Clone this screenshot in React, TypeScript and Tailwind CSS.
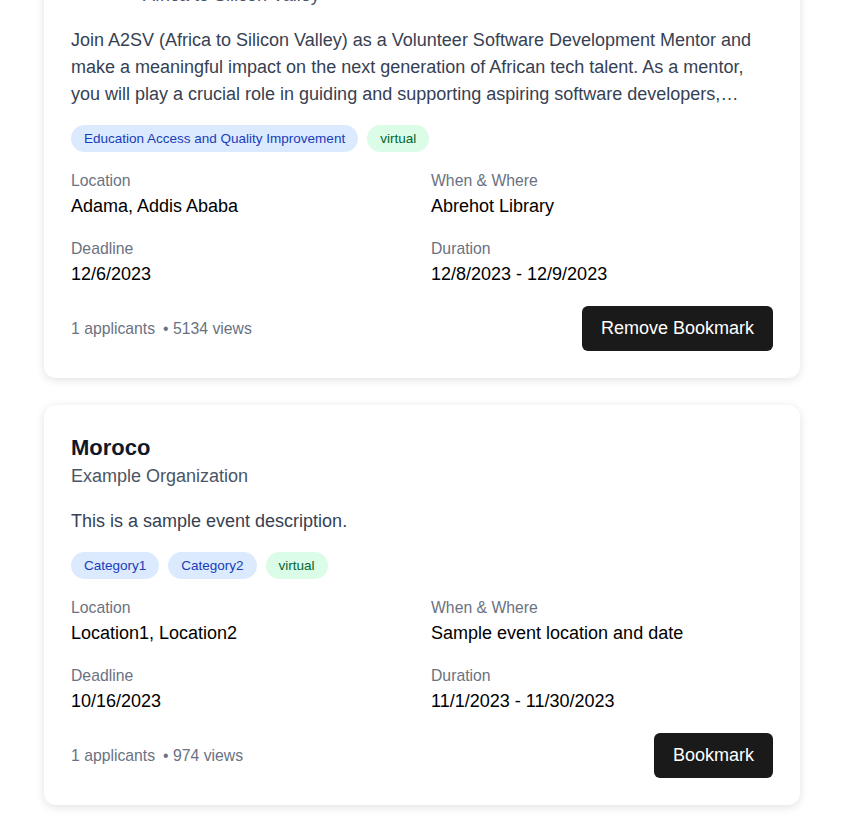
import React from 'react';

type Opportunity = {
  id: string;
  title: string;
  orgName: string;
  logo?: boolean;
  description: string;
  categories: string[];
  mode: string;
  locations: string;
  whenWhere: string;
  deadline: string;
  duration: string;
  applicants: number;
  views: number;
  saved: boolean;
};

const opportunities: Opportunity[] = [
  {
    id: 'a2sv',
    title: 'Volunteer Software Development Mentor',
    orgName: 'Africa to Silicon Valley',
    logo: true,
    description:
      'Join A2SV (Africa to Silicon Valley) as a Volunteer Software Development Mentor and make a meaningful impact on the next generation of African tech talent. As a mentor, you will play a crucial role in guiding and supporting aspiring software developers, helping them build the skills and confidence needed to thrive.',
    categories: ['Education Access and Quality Improvement'],
    mode: 'virtual',
    locations: 'Adama, Addis Ababa',
    whenWhere: 'Abrehot Library',
    deadline: '12/6/2023',
    duration: '12/8/2023 - 12/9/2023',
    applicants: 1,
    views: 5134,
    saved: true,
  },
  {
    id: 'moroco',
    title: 'Moroco',
    orgName: 'Example Organization',
    description: 'This is a sample event description.',
    categories: ['Category1', 'Category2'],
    mode: 'virtual',
    locations: 'Location1, Location2',
    whenWhere: 'Sample event location and date',
    deadline: '10/16/2023',
    duration: '11/1/2023 - 11/30/2023',
    applicants: 1,
    views: 974,
    saved: false,
  },
];

const Info = ({ label, value }: { label: string; value: string }) => (
  <div>
    <p className="text-[15.75px] leading-[24px] text-gray-500">{label}</p>
    <p className="text-[18px] leading-[27px] text-black">{value}</p>
  </div>
);

const OpportunityCard = ({ item }: { item: Opportunity }) => (
  <div className="bg-white rounded-xl shadow-[0_2px_10px_rgba(0,0,0,0.12)] px-[27px] pt-[28px] pb-[27px]">
    <div className="flex items-start gap-4">
      {item.logo && <div className="w-14 h-12 rounded-lg bg-gray-200 shrink-0" />}
      <div>
        <h2 className="text-[22px] leading-[30px] font-bold text-gray-900">{item.title}</h2>
        <p className="text-[18px] leading-[27px] text-gray-600">{item.orgName}</p>
      </div>
    </div>

    <p className="mt-[18px] text-[18px] leading-[27px] text-gray-700 line-clamp-3">{item.description}</p>

    <div className="mt-[17px] flex flex-wrap gap-[9px]">
      {item.categories.map((c) => (
        <span key={c} className="bg-blue-100 text-blue-800 text-[13.5px] leading-[27px] px-[13px] rounded-full">
          {c}
        </span>
      ))}
      <span className="bg-green-100 text-green-800 text-[13.5px] leading-[27px] px-[13px] rounded-full">
        {item.mode}
      </span>
    </div>

    <div className="mt-[17px] grid grid-cols-2 gap-x-[18px] gap-y-[17px]">
      <Info label="Location" value={item.locations} />
      <Info label="When & Where" value={item.whenWhere} />
      <Info label="Deadline" value={item.deadline} />
      <Info label="Duration" value={item.duration} />
    </div>

    <div className="mt-[18px] flex items-center justify-between">
      <p className="text-[15.75px] text-gray-500">
        <span>{item.applicants} applicants</span>
        <span className="ml-2">• {item.views} views</span>
      </p>
      <button className="bg-[#1a1a1a] text-white text-[18px] leading-[45px] h-[45px] px-[19px] rounded-md">
        {item.saved ? 'Remove Bookmark' : 'Bookmark'}
      </button>
    </div>
  </div>
);

export default function App() {
  return (
    <div className="min-h-screen bg-white font-['Liberation_Sans',Arial,sans-serif] overflow-hidden">
      <div className="ml-[44px] w-[756px] -mt-[76px] pb-8 flex flex-col gap-[27px]">
        {opportunities.map((o) => (
          <OpportunityCard key={o.id} item={o} />
        ))}
      </div>
    </div>
  );
}
